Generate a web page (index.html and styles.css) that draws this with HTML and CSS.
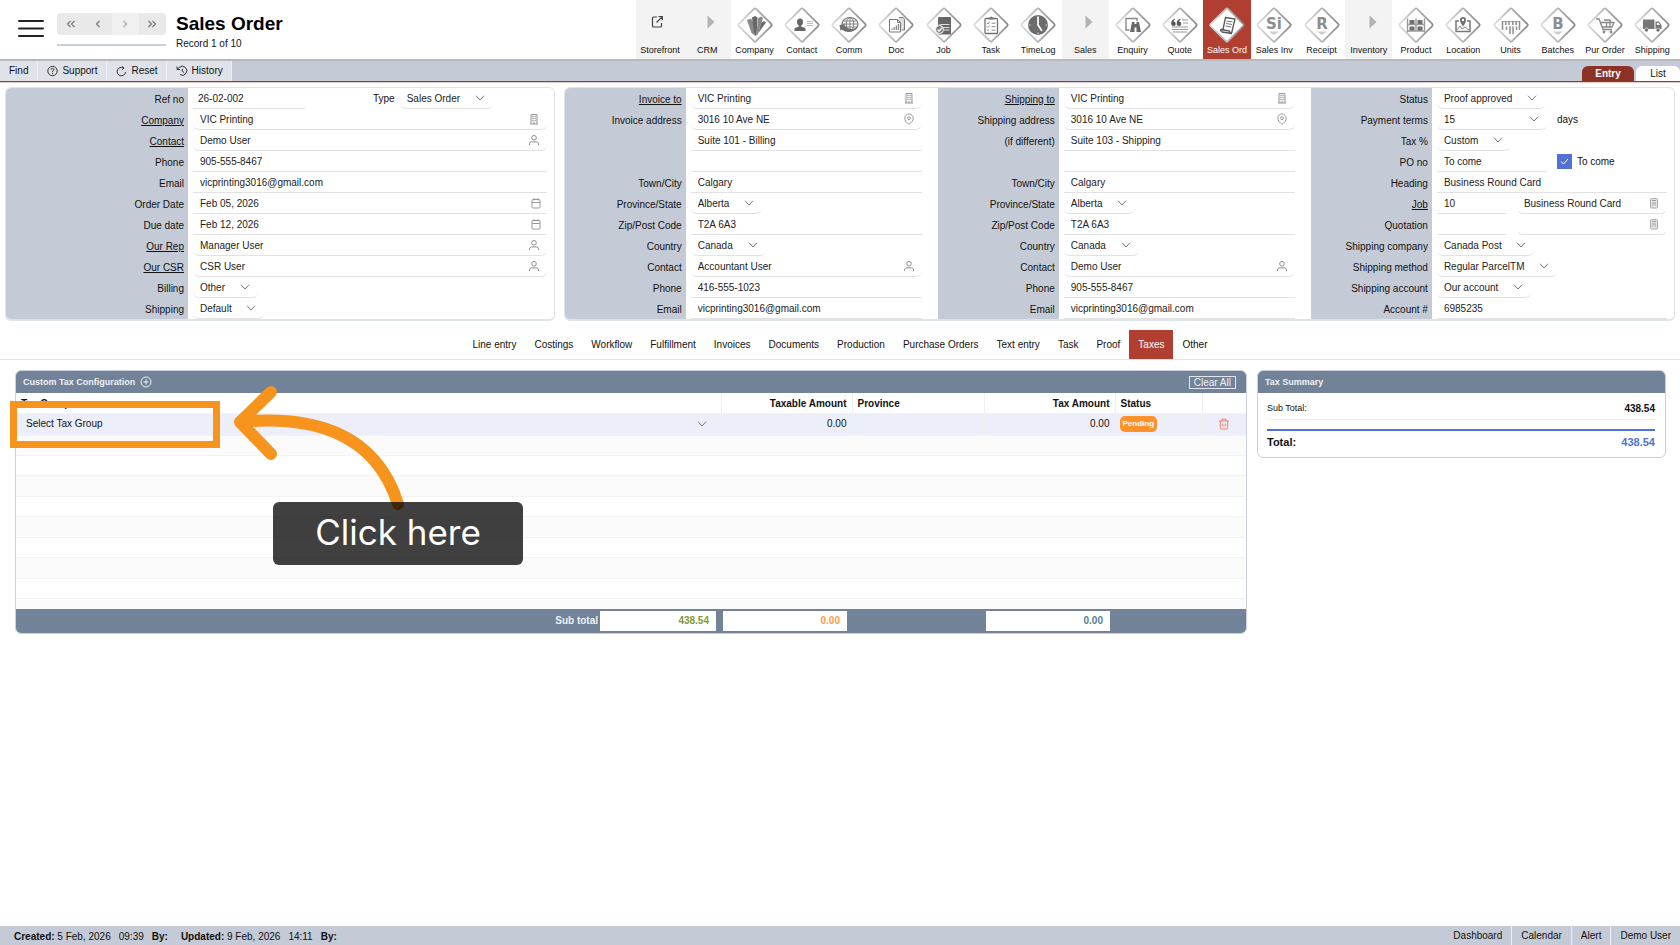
FILE: index.html
```html
<!DOCTYPE html>
<html lang="en">
<head>
<meta charset="utf-8">
<title>Sales Order</title>
<link rel="stylesheet" href="styles.css">
</head>
<body>
<svg class="defs" aria-hidden="true">
  <defs>
    <linearGradient id="edge" x1="0" y1="1" x2="1" y2="0"><stop offset="0" stop-color="#dedede"/><stop offset="0.5" stop-color="#b4b4b4"/><stop offset="1" stop-color="#8a8a8a"/></linearGradient>
    <symbol id="diamond" viewBox="0 0 38 38"><rect x="6.8" y="6.8" width="24.4" height="24.4" rx="1.5" transform="rotate(45 19 19)" fill="#fff" stroke="url(#edge)" stroke-width="1.8"/></symbol>
    <symbol id="play" viewBox="0 0 8 14"><path d="M0.5 0.5 7.500 7 0.5 13.500z" fill="#b3b3b3"/></symbol>
    <symbol id="person" viewBox="0 0 12 12"><circle cx="6" cy="3.800" r="2.300" fill="none" stroke="#8c8c8c"/><path d="M1.500 11V9.800Q1.700 7.900 3.600 7.900H8.400Q10.300 7.900 10.500 9.800V11" fill="none" stroke="#8c8c8c"/></symbol>
    <symbol id="building" viewBox="0 0 12 12"><path d="M3 11V1.500H9V11M2 11H10" fill="#eee" stroke="#999"/><path d="M4.500 3.500H5.500M6.700 3.500H7.600M4.500 5.500H5.500M6.700 5.500H7.600M4.500 7.500H5.500M6.700 7.500H7.600M6 11V9.500" stroke="#888"/></symbol>
    <symbol id="calendar" viewBox="0 0 12 12"><rect x="2" y="2.500" width="8" height="8.500" rx="1" fill="none" stroke="#999"/><path d="M2 5.500H10M4 1V3.500M8 1V3.500" stroke="#999"/></symbol>
    <symbol id="pin" viewBox="0 0 12 12"><path d="M6 11.300C3.500 9.500 1.800 7.600 1.800 5.200A4.200 4.200 0 0 1 10.200 5.200C10.200 7.600 8.500 9.500 6 11.300z" fill="none" stroke="#999"/><circle cx="6" cy="5.200" r="1.400" fill="none" stroke="#999"/></symbol>
    <symbol id="sheet" viewBox="0 0 12 12"><rect x="2.500" y="1.500" width="7" height="9.500" rx="1" fill="#e6e6e6" stroke="#aaa"/><path d="M4 3.500H8M4 6H8M4 8H5.500M6.700 8H8" stroke="#999"/></symbol>
  </defs>
</svg>
<div class="page">
  <header class="top">
    <button class="menu" type="button" aria-label="Menu"><svg width="26" height="20" viewBox="0 0 26 20"><path d="M1 2H25M1 9.500H25M1 17H25" stroke="#222" stroke-width="2" stroke-linecap="round"/></svg></button>
    <div class="pager">
      <div class="pager-buttons">
        <button type="button" aria-label="First"><svg width="10" height="8" viewBox="0 0 10 8"><path d="M4.500 1 1.500 4 4.500 7M8.500 1 5.500 4 8.500 7"/></svg></button>
        <button type="button" aria-label="Previous"><svg width="10" height="8" viewBox="0 0 10 8"><path d="M6.500 1 3.500 4 6.500 7"/></svg></button>
        <button type="button" class="dim" aria-label="Next"><svg width="10" height="8" viewBox="0 0 10 8"><path d="M3.500 1 6.500 4 3.500 7"/></svg></button>
        <button type="button" aria-label="Last"><svg width="10" height="8" viewBox="0 0 10 8"><path d="M1.500 1 4.500 4 1.500 7M5.500 1 8.500 4 5.500 7"/></svg></button>
      </div>
      <div class="pager-line"></div>
    </div>
    <div class="title">
      <h1>Sales Order</h1>
      <div class="record">Record 1 of 10</div>
    </div>
    <nav class="modules">
      <a href="#" class="group"><svg class="glyph" viewBox="0 0 38 38"><path d="M16 11H12.500Q11.500 11 11.500 12V20Q11.500 21 12.500 21H19.500Q20.500 21 20.500 20V17M15.500 16.500 21 10.800M17.500 10.500H21.300V14.300" fill="none" stroke="#444" stroke-width="1.200"/></svg>Storefront</a>
      <a href="#" class="group"><span class="glyph"><svg class="arrow" width="8" height="14"><use href="#play"/></svg></span>CRM</a>
      <a href="#"><svg class="glyph" viewBox="0 0 38 38"><use href="#diamond"/><path d="M11 14 15 12.500 18 17.500V29L15.500 27z" fill="#8a8a8a"/><path d="M16 11.500 19 10 21.500 11.500 20.500 29.500H18.500z" fill="#666"/><path d="M22 12.500 25 10.500 27 12 21.500 29H20.500z" fill="#888"/><path d="M25 17 28 15 30 16.500 22.500 27z" fill="#6c6c6c"/></svg>Company</a>
      <a href="#"><svg class="glyph" viewBox="0 0 38 38"><use href="#diamond"/><ellipse cx="17" cy="16" rx="3" ry="3.600" fill="#666"/><path d="M15.800 18H18.200V20.500L22 22Q22.800 23 22.600 25H11.400Q11.200 23 12 22L15.800 20.500z" fill="#666"/><path d="M24 15.500H30M24 17.500H30M24 19.500H30" stroke="#bbb"/></svg>Contact</a>
      <a href="#"><svg class="glyph" viewBox="0 0 38 38"><use href="#diamond"/><ellipse cx="20" cy="18" rx="8" ry="6.500" fill="none" stroke="#777" stroke-width="1.200"/><ellipse cx="20" cy="18" rx="3.800" ry="6.500" fill="none" stroke="#777"/><path d="M12 18H28M13 15H27M13 21H27M20 11.500V24.500" stroke="#777" stroke-width=".9"/><path d="M9.500 19 15.500 18 14.500 20Q19 25 28 21.500Q20 29.500 11.500 23.500L10.500 25z" fill="#707070"/></svg>Comm</a>
      <a href="#"><svg class="glyph" viewBox="0 0 38 38"><use href="#diamond"/><path d="M22 12V11.500H26L27.500 13.500V24H24.500" fill="#ddd" stroke="#777"/><path d="M12.500 13.500H20.500L23.500 16.500V26H12.500z" fill="#fff" stroke="#777"/><path d="M20.500 13.500V16.500H23.500" fill="none" stroke="#777"/><path d="M15 24V22.500M17.200 24V21M19.400 24V19.500M21.500 24V18" stroke="#888" stroke-width="1.300"/></svg>Doc</a>
      <a href="#"><svg class="glyph" viewBox="0 0 38 38"><use href="#diamond"/><rect x="13" y="11" width="13" height="17.500" rx="1" fill="#666"/><path d="M14.500 18.500H24.500M18 21.500H24.500M19 24H24.500" stroke="#ddd" stroke-width="1.200"/><circle cx="14.500" cy="23.500" r="4" fill="#777" stroke="#fff"/><path d="M12.500 23.500 14.200 25.200 17 21.800" fill="none" stroke="#fff" stroke-width="1.400"/></svg>Job</a>
      <a href="#"><svg class="glyph" viewBox="0 0 38 38"><use href="#diamond"/><rect x="13" y="12.500" width="12.500" height="15" rx="1" fill="#fff" stroke="#707070" stroke-width="1.300"/><path d="M16.500 13.500V11.500H18.200L19.200 10.200 20.200 11.500H22V13.500z" fill="#777"/><path d="M15 17 16 18 17.500 16M15 20.500 16 21.500 17.500 19.500M15 24H17M19.500 17.200H23.500M19.500 20.700H23.500M19.500 24.200H23.500" fill="none" stroke="#888"/></svg>Task</a>
      <a href="#"><svg class="glyph" viewBox="0 0 38 38"><use href="#diamond"/><circle cx="19" cy="19" r="10" fill="#6c6c6c"/><path d="M19 11V19L23 25" fill="none" stroke="#fff" stroke-width="1.700"/><path d="M19 10V11.500M19 26.500V28M10 19H11.500M26.500 19H28" stroke="#ddd"/></svg>TimeLog</a>
      <a href="#" class="group"><span class="glyph"><svg class="arrow" width="8" height="14"><use href="#play"/></svg></span>Sales</a>
      <a href="#"><svg class="glyph" viewBox="0 0 38 38"><use href="#diamond"/><path d="M15.500 24H12V12.500H23V15" fill="none" stroke="#888" stroke-width="1.400"/><path d="M18 16H20.500V18H22.500V16H25L27 26H22.500V21.500H20.500V26H16z" fill="#686868"/></svg>Enquiry</a>
      <a href="#"><svg class="glyph" viewBox="0 0 38 38"><use href="#diamond"/><path d="M14 13Q10 14 10.500 17.500A2 2 0 1 0 12.500 15.800Q12.300 14.500 14 13zM19.500 13Q15.500 14 16 17.500A2 2 0 1 0 18 15.800Q17.800 14.500 19.500 13z" fill="#555" stroke="#555" stroke-width=".5"/><path d="M21 14H27M22 17H27M11 21H27M11 23.500H27M12 26H26" stroke="#999" stroke-width="1.200"/></svg>Quote</a>
      <a href="#" class="current"><svg class="glyph" viewBox="0 0 38 38"><use href="#diamond"/><path d="M17.500 11.500 27 13 23.500 27.500 14 26Q12 25 13 23.500H15z" fill="#fff" stroke="#555" stroke-width="1.300"/><path d="M18.500 15 24.500 16M18 17.500 24 18.500M17.500 20 23.300 21" stroke="#777"/><path d="M13 23.500 21.500 25Q21.500 27.500 23.500 27.500" fill="none" stroke="#555" stroke-width="1.300"/></svg>Sales Ord</a>
      <a href="#"><svg class="glyph" viewBox="0 0 38 38"><use href="#diamond"/><text x="19" y="23" class="letter">Si</text><path d="M14 25.500H24L19 29z" fill="#ccc"/></svg>Sales Inv</a>
      <a href="#"><svg class="glyph" viewBox="0 0 38 38"><use href="#diamond"/><text x="19" y="23" class="letter">R</text><path d="M14 25.500H24L19 29z" fill="#ccc"/></svg>Receipt</a>
      <a href="#" class="group"><span class="glyph"><svg class="arrow" width="8" height="14"><use href="#play"/></svg></span>Inventory</a>
      <a href="#"><svg class="glyph" viewBox="0 0 38 38"><use href="#diamond"/><path d="M10.500 12.500V26.500M27.500 12.500V26.500M10.500 18.500H27.500M10.500 25H27.500M19 12.500V25" stroke="#999" stroke-width="1.400"/><path d="M12.500 14H17.500V18H12.500zM20.500 14H25.500V18H20.500zM12.500 20.500H17.500V24.500H12.500zM20.500 20.500H25.500V24.500H20.500z" fill="#707070"/></svg>Product</a>
      <a href="#"><svg class="glyph" viewBox="0 0 38 38"><use href="#diamond"/><path d="M15 15H12V25.500H26V15H23" fill="none" stroke="#777" stroke-width="1.500"/><path d="M19 20.500Q16 16.500 16 14A3 3 0 0 1 22 14Q22 16.500 19 20.500z" fill="#707070"/><circle cx="19" cy="14" r="1.200" fill="#fff"/><path d="M13 24 16 20 18 23 21 21 25 24" fill="none" stroke="#888"/></svg>Location</a>
      <a href="#"><svg class="glyph" viewBox="0 0 38 38"><use href="#diamond"/><path d="M10 15.500H28" stroke="#aaa"/><path d="M10.500 15V24M13.800 15V19M17 15V19M20.800 15V19M24.200 15V19M27.500 15V24M14.500 20.500V24M18 20.500V28M21 20.500V28M24.500 20.500V24" stroke="#8c8c8c" stroke-width="1.500"/></svg>Units</a>
      <a href="#"><svg class="glyph" viewBox="0 0 38 38"><use href="#diamond"/><text x="19" y="23" class="letter">B</text><path d="M14 25.500H24L19 29z" fill="#ccc"/></svg>Batches</a>
      <a href="#"><svg class="glyph" viewBox="0 0 38 38"><use href="#diamond"/><path d="M10 13H13L17 23.500H26M14.500 16.500H28L26 21H16M18 14H24V19M20.500 16.500V21M24 16.500V21" fill="none" stroke="#888" stroke-width="1.300"/><circle cx="18" cy="26" r="1.400" fill="#888"/><circle cx="25" cy="26" r="1.400" fill="#888"/></svg>Pur Order</a>
      <a href="#"><svg class="glyph" viewBox="0 0 38 38"><use href="#diamond"/><path d="M10 13.500H21.500V23H10zM22.500 15.500H26L28.500 19V23H22.500z" fill="#777"/><path d="M23.800 16.800H25.500L27 19H23.800z" fill="#fff"/><circle cx="13.500" cy="24" r="1.900" fill="#666" stroke="#fff" stroke-width=".6"/><circle cx="25" cy="24" r="1.900" fill="#666" stroke="#fff" stroke-width=".6"/></svg>Shipping</a>
    </nav>
  </header>

  <div class="toolbar">
    <button type="button">Find</button>
    <button type="button"><svg width="11" height="12" viewBox="0 0 11 12"><circle cx="5.500" cy="6" r="4.700"/><path d="M4 4.800Q4.100 3.400 5.500 3.400T7 4.700Q7 5.500 5.500 6.200V7.200M5.500 8V9"/></svg>Support</button>
    <button type="button"><svg width="11" height="12" viewBox="0 0 11 12"><path d="M6 1.500 8 3 6.200 4.800M7.500 3A4.200 4.200 0 1 0 9.500 7"/></svg>Reset</button>
    <button type="button"><svg width="12" height="12" viewBox="0 0 12 12"><path d="M1 1.500V4.500H4M1.300 4.300 3.200 2.500A4.500 4.500 0 1 1 4 9.600M6.300 3.800V6.300L8 7.500"/></svg>History</button>
    <div class="view-tabs">
      <button type="button" class="on">Entry</button>
      <button type="button">List</button>
    </div>
  </div>

  <main>
    <form class="forms">
      <section class="panel panel-main">
        <div class="col wide">
          <div class="row"><label for="ref">Ref no</label><div class="val"><div class="field ref"><input id="ref" value="26-02-002"></div><span class="spacer"></span><label class="inline" for="type">Type</label><select id="type"><option>Sales Order</option></select><span class="tail"></span></div></div>
          <div class="row"><label for="company"><a href="#">Company</a></label><div class="val"><div class="field look"><input id="company" value="VIC Printing"><svg><use href="#building"/></svg></div></div></div>
          <div class="row"><label for="contact"><a href="#">Contact</a></label><div class="val"><div class="field look"><input id="contact" value="Demo User"><svg><use href="#person"/></svg></div></div></div>
          <div class="row"><label for="phone">Phone</label><div class="val"><div class="field"><input id="phone" value="905-555-8467"></div></div></div>
          <div class="row"><label for="email">Email</label><div class="val"><div class="field"><input id="email" value="vicprinting3016@gmail.com"></div></div></div>
          <div class="row"><label for="odate">Order Date</label><div class="val"><div class="field date"><input id="odate" value="Feb 05, 2026"><svg><use href="#calendar"/></svg></div></div></div>
          <div class="row"><label for="ddate">Due date</label><div class="val"><div class="field date"><input id="ddate" value="Feb 12, 2026"><svg><use href="#calendar"/></svg></div></div></div>
          <div class="row"><label for="rep"><a href="#">Our Rep</a></label><div class="val"><div class="field look"><input id="rep" value="Manager User"><svg><use href="#person"/></svg></div></div></div>
          <div class="row"><label for="csr"><a href="#">Our CSR</a></label><div class="val"><div class="field look"><input id="csr" value="CSR User"><svg><use href="#person"/></svg></div></div></div>
          <div class="row"><label for="billing">Billing</label><div class="val"><select id="billing"><option>Other</option></select></div></div>
          <div class="row"><label for="shipping">Shipping</label><div class="val"><select id="shipping"><option>Default</option></select></div></div>
        </div>
      </section>
      <section class="panel panel-address">
        <div class="col gutter">
          <div class="row"><label for="inv"><a href="#">Invoice to</a></label><div class="val"><div class="field look"><input id="inv" value="VIC Printing"><svg><use href="#building"/></svg></div></div></div>
          <div class="row"><label for="ia1">Invoice address</label><div class="val"><div class="field look"><input id="ia1" value="3016 10 Ave NE"><svg><use href="#pin"/></svg></div></div></div>
          <div class="row"><label for="ia2"></label><div class="val"><div class="field"><input id="ia2" aria-label="Invoice address line 2" value="Suite 101 - Billing"></div></div></div>
          <div class="row"><label for="ia3"></label><div class="val"><div class="field"><input id="ia3" aria-label="Invoice address line 3"></div></div></div>
          <div class="row"><label for="icity">Town/City</label><div class="val"><div class="field"><input id="icity" value="Calgary"></div></div></div>
          <div class="row"><label for="iprov">Province/State</label><div class="val"><select id="iprov"><option>Alberta</option></select></div></div>
          <div class="row"><label for="izip">Zip/Post Code</label><div class="val"><div class="field"><input id="izip" value="T2A 6A3"></div></div></div>
          <div class="row"><label for="icountry">Country</label><div class="val"><select id="icountry"><option>Canada</option></select></div></div>
          <div class="row"><label for="icontact">Contact</label><div class="val"><div class="field look"><input id="icontact" value="Accountant User"><svg><use href="#person"/></svg></div></div></div>
          <div class="row"><label for="iphone">Phone</label><div class="val"><div class="field"><input id="iphone" value="416-555-1023"></div></div></div>
          <div class="row"><label for="iemail">Email</label><div class="val"><div class="field"><input id="iemail" value="vicprinting3016@gmail.com"></div></div></div>
        </div>
        <div class="col gutter">
          <div class="row"><label for="shp"><a href="#">Shipping to</a></label><div class="val"><div class="field look"><input id="shp" value="VIC Printing"><svg><use href="#building"/></svg></div></div></div>
          <div class="row"><label for="sa1">Shipping address</label><div class="val"><div class="field look"><input id="sa1" value="3016 10 Ave NE"><svg><use href="#pin"/></svg></div></div></div>
          <div class="row"><label for="sa2">(if different)</label><div class="val"><div class="field"><input id="sa2" value="Suite 103 - Shipping"></div></div></div>
          <div class="row"><label for="sa3"></label><div class="val"><div class="field"><input id="sa3" aria-label="Shipping address line 3"></div></div></div>
          <div class="row"><label for="scity">Town/City</label><div class="val"><div class="field"><input id="scity" value="Calgary"></div></div></div>
          <div class="row"><label for="sprov">Province/State</label><div class="val"><select id="sprov"><option>Alberta</option></select></div></div>
          <div class="row"><label for="szip">Zip/Post Code</label><div class="val"><div class="field"><input id="szip" value="T2A 6A3"></div></div></div>
          <div class="row"><label for="scountry">Country</label><div class="val"><select id="scountry"><option>Canada</option></select></div></div>
          <div class="row"><label for="scontact">Contact</label><div class="val"><div class="field look"><input id="scontact" value="Demo User"><svg><use href="#person"/></svg></div></div></div>
          <div class="row"><label for="sphone">Phone</label><div class="val"><div class="field"><input id="sphone" value="905-555-8467"></div></div></div>
          <div class="row"><label for="semail">Email</label><div class="val"><div class="field"><input id="semail" value="vicprinting3016@gmail.com"></div></div></div>
        </div>
        <div class="col last">
          <div class="row"><label for="status">Status</label><div class="val"><select id="status"><option>Proof approved</option></select></div></div>
          <div class="row"><label for="terms">Payment terms</label><div class="val"><select id="terms" class="medium"><option>15</option></select><span class="inline">days</span></div></div>
          <div class="row"><label for="tax">Tax %</label><div class="val"><select id="tax"><option>Custom</option></select></div></div>
          <div class="row"><label for="po">PO no</label><div class="val"><div class="field medium"><input id="po" value="To come"></div><label class="inline check"><input type="checkbox" checked>To come</label></div></div>
          <div class="row"><label for="heading">Heading</label><div class="val"><div class="field"><input id="heading" value="Business Round Card"></div></div></div>
          <div class="row"><label for="job"><a href="#">Job</a></label><div class="val"><div class="field small"><input id="job" value="10"></div><div class="field look"><input aria-label="Job name" value="Business Round Card"><svg><use href="#sheet"/></svg></div></div></div>
          <div class="row"><label for="quotation">Quotation</label><div class="val"><div class="field small"><input id="quotation"></div><div class="field look"><input aria-label="Quotation name"><svg><use href="#sheet"/></svg></div></div></div>
          <div class="row"><label for="scomp">Shipping company</label><div class="val"><select id="scomp"><option>Canada Post</option></select></div></div>
          <div class="row"><label for="smethod">Shipping method</label><div class="val"><select id="smethod"><option>Regular ParcelTM</option></select></div></div>
          <div class="row"><label for="sacc">Shipping account</label><div class="val"><select id="sacc"><option>Our account</option></select></div></div>
          <div class="row"><label for="acc">Account #</label><div class="val"><div class="field"><input id="acc" value="6985235"></div></div></div>
        </div>
      </section>
    </form>

    <nav class="tabs">
      <a href="#">Line entry</a><a href="#">Costings</a><a href="#">Workflow</a><a href="#">Fulfillment</a><a href="#">Invoices</a><a href="#">Documents</a><a href="#">Production</a><a href="#">Purchase Orders</a><a href="#">Text entry</a><a href="#">Task</a><a href="#">Proof</a><a href="#" class="on">Taxes</a><a href="#">Other</a>
    </nav>

    <div class="content">
      <section class="card config">
        <div class="card-head"><h2>Custom Tax Configuration</h2><button type="button" class="add" aria-label="Add"><svg width="12" height="12" viewBox="0 0 12 12"><circle cx="6" cy="6" r="5"/><path d="M3.500 6H8.500M6 3.500V8.500"/></svg></button><button type="button" class="clear">Clear All</button></div>
        <table>
          <colgroup><col><col class="c2"><col class="c3"><col class="c4"><col class="c5"><col class="c6"></colgroup>
          <thead><tr><th>Tax Group</th><th class="num">Taxable Amount</th><th>Province</th><th class="num">Tax Amount</th><th>Status</th><th></th></tr></thead>
          <tbody>
            <tr class="selected"><td><select class="group-select" aria-label="Tax Group"><option>Select Tax Group</option></select></td><td class="num">0.00</td><td></td><td class="num">0.00</td><td><span class="badge">Pending</span></td><td class="del"><button type="button" aria-label="Delete"><svg width="12" height="12" viewBox="0 0 12 12"><path d="M1 3H11M4 3V1.200H8V3M2.300 3V9.800Q2.300 11 3.500 11H8.500Q9.700 11 9.700 9.800V3M4.800 5.500V8.500M7.200 5.500V8.500"/></svg></button></td></tr>
            <tr><td colspan="6"></td></tr><tr><td colspan="6"></td></tr><tr><td colspan="6"></td></tr><tr><td colspan="6"></td></tr><tr><td colspan="6"></td></tr><tr><td colspan="6"></td></tr><tr><td colspan="6"></td></tr><tr><td colspan="6"></td></tr><tr><td colspan="6"></td></tr>
          </tbody>
          <tfoot><tr><td><div class="sum"><span>Sub total</span><output class="green">438.54</output></div></td><td><output class="orange">0.00</output></td><td></td><td><output class="teal">0.00</output></td><td></td><td></td></tr></tfoot>
        </table>
      </section>
      <section class="card summary">
        <div class="card-head"><h2>Tax Summary</h2></div>
        <div class="summary-body">
          <div class="line"><span>Sub Total:</span><b>438.54</b></div>
          <div class="total"><span>Total:</span><b>438.54</b></div>
        </div>
      </section>
    </div>
  </main>

  <footer class="statusbar">
    <div class="stamps"><span><b>Created:</b> 5 Feb, 2026</span><span>09:39</span><b>By:</b><span class="updated"><b>Updated:</b> 9 Feb, 2026</span><span>14:11</span><b>By:</b></div>
    <nav><a href="#">Dashboard</a><a href="#">Calendar</a><a href="#">Alert</a><a href="#">Demo User</a></nav>
  </footer>

  <div class="highlight"></div>
  <svg class="pointer" width="190" height="130" viewBox="0 0 190 130" aria-hidden="true"><path d="M10 42C78 35 145 50 168 124M41 12 10 42 41 74" fill="none" stroke="#f7941d" stroke-width="12" stroke-linecap="round" stroke-linejoin="round"/></svg>
  <div class="callout">Click here</div>
</div>
</body>
</html>
```

FILE: styles.css
```css
* { box-sizing: border-box; }
body { margin: 0; background: #fff; color: #111; font: 10px/12px "Liberation Sans", Arial, sans-serif; }
a { color: inherit; }
button, input, select { margin: 0; padding: 0; border: 0; border-radius: 0; background: none; color: inherit; font: inherit; }
.defs { position: absolute; width: 0; height: 0; }
.page { position: relative; min-height: 100vh; display: flex; flex-direction: column; }
main { flex: 1; }

.top { display: flex; height: 61px; padding: 0 4px 0 18px; border-bottom: 2px solid #b7b9bf; }
.menu { width: 26px; height: 20px; margin-top: 19px; }
.pager { width: 109px; margin: 13px 10px 0 13px; }
.pager-buttons { display: flex; height: 22px; border-radius: 4px; overflow: hidden; background: #e9e9e9; }
.pager-buttons button { flex: 1; display: flex; align-items: center; justify-content: center; }
.pager-buttons .dim { background: #f1f1f1; }
.pager-buttons path { fill: none; stroke: #777; stroke-width: 1.2; }
.pager-buttons .dim path { stroke: #aaa; }
.pager-line { margin-top: 9px; height: 2px; background: #c9cfd9; }
h1 { margin: 12px 0 0; font-size: 19px; line-height: 24px; color: #000; }
.record { margin-top: 2px; }
.modules { display: grid; grid-template-columns: repeat(22, 1fr); width: 62.7%; margin-left: auto; font-size: 9px; }
.modules a { display: flex; flex-direction: column; align-items: center; padding-top: 6px; color: #111; text-decoration: none; white-space: nowrap; }
.glyph { display: block; flex: none; width: 38px; height: 38px; }
.arrow { display: block; margin: 9px 0 0 19px; }
.modules .group { background: #f3f3f3; }
.modules .current { background: #b03f31; color: #fff; }
.letter { font: bold 15px "DejaVu Sans", sans-serif; fill: #8d8d8d; text-anchor: middle; }

.toolbar { display: flex; height: 21px; background: #c5cbd6; border-bottom: 1px solid #953a2d; box-shadow: 0 1px #e3cbc7; }
.toolbar > button { display: flex; align-items: center; gap: 4px; padding: 0 9px; background: #dfe3e9; border-right: 1px solid #eef0f3; }
.toolbar svg { fill: none; stroke: #333; }
.toolbar > button:nth-of-type(n + 3) { padding: 0 8px 0 9px; }
.view-tabs { display: flex; gap: 2px; margin: 5px 0 0 auto; }
.view-tabs button { width: 44px; border-radius: 6px 6px 0 0; background: #fff; }
.view-tabs .on { width: 52px; background: #8b3126; color: #fff; font-weight: bold; }

.forms { display: flex; gap: 9px; padding: 5px 5px 0; }
.panel { display: flex; border: 1px solid #dfe3ea; border-bottom-width: 2px; border-radius: 6px; overflow: hidden; }
.panel-main { flex: 549; }
.panel-address { flex: 1112; }
.col { flex: 373; min-width: 0; --label: 121px; --end: 16px; }
.col.wide { --label: 182px; --end: 7px; }
.col.last { flex: 363; --end: 7px; }
.row { display: grid; grid-template-columns: var(--label) minmax(0, 1fr); height: 21px; }
.row > label { display: flex; align-items: center; justify-content: flex-end; padding: 2px 4px 0 0; background: #c5cbd6; }
.val { display: flex; padding: 0 var(--end) 0 5px; color: #222; }
.field { flex: 1; min-width: 0; display: flex; align-items: center; border-bottom: 1px solid #e2e2e4; }
.field input { flex: 1; width: 0; height: 20px; padding: 0 7px; }
.field svg { width: 12px; height: 12px; margin-right: 7px; }
.field.date svg { margin-right: 5px; }
.field.look { border-radius: 0 0 6px 6px; }
.field.ref { flex: none; width: 112px; }
.field.ref input { padding-left: 5px; }
.field.medium, select.medium { flex: none; width: 110px; }
.field.small { flex: none; width: 70px; margin-right: 10px; }
.spacer { flex: 1; }
.tail { width: 54px; }
.inline { align-self: center; margin-right: 5px; color: #111; }
.medium + .inline { margin-left: 10px; }
select { appearance: none; padding: 1px 32px 0 7px; border-bottom: 1px solid #e2e2e4; border-radius: 0 0 6px 6px; background: url("data:image/svg+xml,%3Csvg xmlns='http://www.w3.org/2000/svg' width='10' height='6'%3E%3Cpath d='M1 .7 5 5 9 .7' fill='none' stroke='%23777'/%3E%3C/svg%3E") no-repeat right 8px center; }
.check { display: flex; align-items: center; gap: 5px; }
.check input { appearance: none; width: 15px; height: 15px; background: #5271d6 url("data:image/svg+xml,%3Csvg xmlns='http://www.w3.org/2000/svg' width='9' height='7'%3E%3Cpath d='M1 3.500 3.500 6 8 1' fill='none' stroke='white'/%3E%3C/svg%3E") no-repeat center; }

.tabs { display: flex; justify-content: center; margin-top: 9px; border-bottom: 1px solid #e4e4e6; }
.tabs a { padding: 9px 9px 8px; color: #111; text-decoration: none; }
.tabs .on { background: #b03f31; color: #fff; }

.content { display: flex; align-items: flex-start; gap: 10px; padding: 10px 14px 0 15px; }
.card { border: 1px solid #c9d0db; border-radius: 6px; overflow: hidden; }
.config { flex: 1233; }
.summary { flex: 408; }
.card-head { display: flex; align-items: center; height: 22px; padding: 0 10px 0 7px; background: #718299; color: #eef1f5; }
h2 { margin: 0; font-size: 9px; line-height: 12px; }
.add { width: 12px; height: 12px; margin-left: 5px; }
.add svg { display: block; fill: none; stroke: #eef1f5; }
.clear { height: 13px; margin-left: auto; padding: 0 4px; border: 1px solid #e3e7ed; line-height: 11px; }
table { width: 100%; height: 240px; table-layout: fixed; border-collapse: collapse; }
.c2, .c4 { width: 131px; }
.c3 { width: 132px; }
.c5 { width: 87px; }
.c6 { width: 44px; }
th, td { padding: 0 5px; text-align: left; }
thead tr { height: 20px; }
thead th { padding-top: 2px; }
th + th, .selected td + td { border-left: 1px solid #f0f0f2; }
.num { text-align: right; }
tbody tr { border-top: 1px solid #f2f2f3; }
tbody tr:nth-child(even) { background: #fbfbfb; }
tbody .selected { height: 22px; background: #eceef9; }
.group-select { display: block; width: 100%; height: 20px; padding: 0 34px 0 5px; border: 0; background-position: right 9px center; }
.badge { display: inline-block; margin-left: -1px; padding: 2px 3px; border-radius: 5px; background: #ff922b; color: #fff; font-size: 8px; font-weight: bold; }
.del { text-align: center; }
.del button, .del svg { display: block; margin: auto; }
.del svg { fill: none; stroke: #f47b6c; }
tfoot tr { height: 24px; background: #718299; color: #eef1f5; font-weight: bold; }
tfoot td { padding: 0 5px 0 2px; }
tfoot output { display: block; height: 20px; padding: 4px 7px; background: #fff; text-align: right; }
.sum { display: flex; align-items: center; justify-content: flex-end; gap: 2px; }
.sum output { width: 116px; }
.green { color: #7f9a3a; }
.orange { color: #ff9a4a; }
.teal { color: #54809c; }
.summary-body { padding: 9px 10px 8px 9px; }
.line, .total { display: flex; justify-content: space-between; }
.line { padding-bottom: 4px; border-bottom: 1px solid #ededed; line-height: 13px; font-size: 9px; }
.line b { font-size: 10px; }
.total { margin-top: 9px; padding-top: 4px; border-top: 2px solid #5271d6; font-size: 11px; font-weight: bold; line-height: 14px; }
.total b { color: #5271d6; }

.statusbar { display: flex; align-items: stretch; height: 19px; background: #c5cbd6; color: #111; }
.stamps { display: flex; align-items: center; gap: 8px; padding: 2px 0 0 14px; }
.updated { margin-left: 5px; }
.statusbar nav { display: flex; margin-left: auto; }
.statusbar nav a { padding: 4px 9px; text-decoration: none; }
.statusbar nav a + a { border-left: 1px solid #eef0f3; }

.highlight { position: absolute; left: 10px; top: 401px; width: 210px; height: 47px; border: 7px solid #f7941d; }
.pointer { position: absolute; left: 230px; top: 380px; }
.callout { position: absolute; left: 273px; top: 502px; width: 250px; height: 63px; border-radius: 6px; background: rgba(0, 0, 0, .75); color: #fff; font: 35px/60px Inter, sans-serif; text-align: center; }
```
